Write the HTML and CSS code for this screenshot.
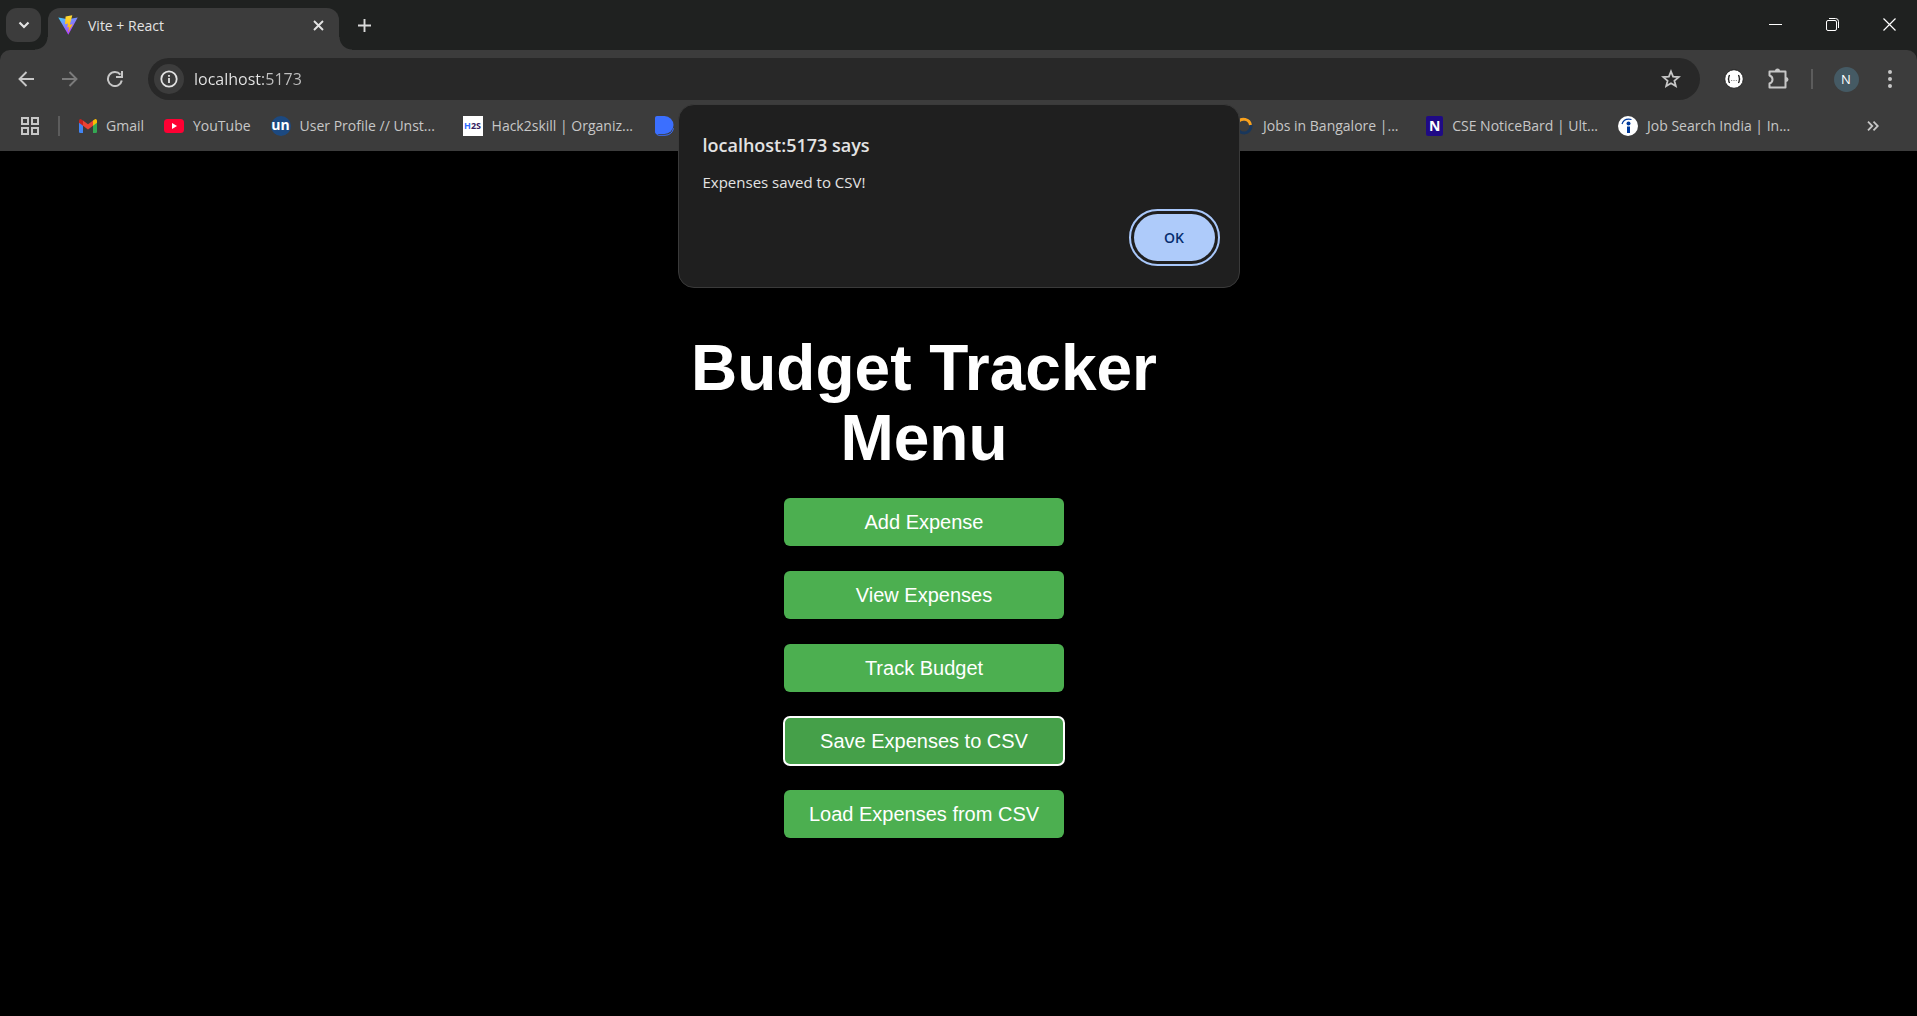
FILE: index.html
```html
<!DOCTYPE html>
<html lang="en">
<head>
<meta charset="utf-8">
<title>Vite + React</title>
<link rel="stylesheet" href="styles.css">
</head>
<body>
<header class="browser">
  <div class="tabstrip">
    <button class="tab-search" aria-label="Search tabs"><svg width="12" height="8" viewBox="0 0 12 8"><path d="M1.500 1.500 6 6l4.500-4.500" fill="none" stroke="#e3e3e3" stroke-width="2.200"/></svg></button>
    <div class="tab">
      <svg width="20" height="20" viewBox="0 0 20 20">
        <defs>
          <linearGradient id="vite" x1="0" y1="0" x2=".6" y2="1"><stop offset="0" stop-color="#41d1ff"/><stop offset="1" stop-color="#bd34fe"/></linearGradient>
          <linearGradient id="bolt" x1="0" y1="0" x2="0" y2="1"><stop offset="0" stop-color="#ffdd35"/><stop offset="1" stop-color="#ffa800"/></linearGradient>
        </defs>
        <path d="M.300 2.600 10 4.200l9.700-1.600L10.300 19.800z" fill="url(#vite)"/>
        <path d="M14.300.2 7.600 1.500 7 9.200l3-.7-.8 4 2-.5-1.400 5.500 5-8.300-3 .6z" fill="url(#bolt)"/>
      </svg>
      <span class="tab-title">Vite + React</span>
      <button class="tab-close" aria-label="Close tab"><svg width="11" height="11" viewBox="0 0 11 11"><path d="m1 1 9 9M10 1l-9 9" stroke="#e3e3e3" stroke-width="1.900"/></svg></button>
    </div>
    <button class="new-tab" aria-label="New tab"><svg width="13" height="13" viewBox="0 0 13 13"><path d="M6.500 0v13M0 6.500h13" stroke="#dadada" stroke-width="1.900"/></svg></button>
    <div class="window-controls">
      <button aria-label="Minimize"><svg width="13" height="13" viewBox="0 0 13 13"><path d="M0 6.500h13" stroke="#fff"/></svg></button>
      <button aria-label="Restore"><svg width="13" height="13" viewBox="0 0 13 13"><path d="M3 .5h6.500a3 3 0 0 1 3 3V10" fill="none" stroke="#fff"/><rect x=".5" y="2.500" width="10" height="10" rx="1.500" fill="none" stroke="#fff"/></svg></button>
      <button aria-label="Close"><svg width="13" height="13" viewBox="0 0 13 13"><path d="m.5.5 12 12m0-12-12 12" stroke="#fff" stroke-width="1.200"/></svg></button>
    </div>
  </div>

  <div class="toolbar">
    <button class="tool" aria-label="Back"><svg width="16" height="16" viewBox="0 0 16 16"><path d="M16 8H1.500M8.500 1 1.500 8l7 7" fill="none" stroke="#c7c7c7" stroke-width="1.900"/></svg></button>
    <button class="tool" aria-label="Forward"><svg width="16" height="16" viewBox="0 0 16 16"><path d="M0 8h14.500M7.500 1l7 7-7 7" fill="none" stroke="#7b7b7b" stroke-width="1.900"/></svg></button>
    <button class="tool" aria-label="Reload"><svg width="18" height="16" viewBox="-2 0 18 16"><path d="M13.400 3.600A7 7 0 1 0 14.800 9.500" fill="none" stroke="#c7c7c7" stroke-width="2"/><path d="M15 0v6H9" fill="none" stroke="#c7c7c7" stroke-width="2"/></svg></button>
    <div class="omnibox">
      <button class="site-info" aria-label="View site information"><svg width="18" height="18" viewBox="0 0 18 18"><circle cx="9" cy="9" r="7.700" fill="none" stroke="#e3e3e3" stroke-width="1.800"/><path d="M9 8v5M9 5v1.800" stroke="#e3e3e3" stroke-width="1.800"/></svg></button>
      <input class="address" type="text" aria-label="Address" value="localhost:5173">
      <button class="star" aria-label="Bookmark this tab"><svg width="20" height="20" viewBox="0 0 20 20"><path d="m10 2.500 2.100 5.200 5.600.4-4.300 3.600 1.400 5.400L10 14.200l-4.800 2.900 1.400-5.400-4.300-3.600 5.600-.4z" fill="none" stroke="#c7c7c7" stroke-width="1.800"/></svg></button>
    </div>
    <button class="tool" aria-label="JSON viewer extension"><svg width="20" height="20" viewBox="0 0 20 20"><circle cx="10" cy="10" r="9.300" fill="#fff" stroke="#222"/><path d="M6 6.500q-1.200 0-1.200 1.200v1.300q0 1-1 1 1 0 1 1v1.300q0 1.200 1.200 1.200M14 6.500q1.200 0 1.200 1.200v1.300q0 1 1 1-1 0-1 1v1.300q0 1.200-1.200 1.200" fill="none" stroke="#222" stroke-width="1.300"/><path d="M7.200 11.500h1m1.300 0h1m1.300 0h1" stroke="#777" stroke-width="1"/></svg></button>
    <button class="tool" aria-label="Extensions"><svg width="22" height="22" viewBox="0 0 22 22"><path d="M2.500 3.500H18.500V19.500H2.500V15.500Q5.500 14.500 5.500 11.500T2.500 7.500Z" fill="none" stroke="#c7c7c7" stroke-width="2" stroke-linejoin="round"/><path d="M8 3a2.500 2.500 0 0 1 5 0zM19 9a2.500 2.500 0 0 1 0 5z" fill="#c7c7c7"/></svg></button>
    <span class="tool-divider"></span>
    <button class="tool" aria-label="Profile"><span class="avatar">N</span></button>
    <button class="tool" aria-label="Menu"><svg width="4" height="18" viewBox="0 0 4 18"><g fill="#c7c7c7"><circle cx="2" cy="2" r="2"/><circle cx="2" cy="9" r="2"/><circle cx="2" cy="16" r="2"/></g></svg></button>
  </div>

  <nav class="bookmarks" aria-label="Bookmarks">
    <button class="apps" aria-label="Apps"><svg width="18" height="18" viewBox="0 0 18 18"><g fill="none" stroke="#c7c7c7" stroke-width="2"><path d="M1 1h6v6H1zM11 1h6v6h-6zM1 11h6v6H1zM11 11h6v6h-6z"/></g></svg></button>
    <span class="bar-divider"></span>
    <a class="bookmark" href="#gmail"><svg width="18" height="14" viewBox="0 0 18 14"><path d="M0 3h4v11H1.300A1.300 1.300 0 0 1 0 12.700z" fill="#4285f4"/><path d="M14 3h4v9.700a1.300 1.300 0 0 1-1.300 1.300H14z" fill="#34a853"/><path d="M14 1.500 15.500.4A1.600 1.600 0 0 1 18 1.700v2.100l-4 3z" fill="#fbbc04"/><path d="M4 1.500 2.500.4A1.600 1.600 0 0 0 0 1.700v2.100l4 3z" fill="#c5221f"/><path d="M4 1.500 9 5.300l5-3.800v5.300l-5 3.700-5-3.700z" fill="#ea4335"/></svg>Gmail</a>
    <a class="bookmark" href="#youtube"><svg width="20" height="14" viewBox="0 0 20 14"><rect width="20" height="14" rx="3.500" fill="#ff0033"/><path d="m8 4 5 3-5 3z" fill="#fff"/></svg>YouTube</a>
    <a class="bookmark wide" href="#profile"><span class="badge un">un</span>User Profile // Unst...</a>
    <a class="bookmark wide" href="#hack2skill"><span class="badge h2s"><i>H</i>2S</span>Hack2skill | Organiz...</a>
    <a class="bookmark" href="#docs" aria-label="Docs"><svg width="20" height="20" viewBox="0 0 20 20"><path d="M1 16.500q.5 2.800 3 2.800h6a9 9 0 0 0 8.500-7" fill="none" stroke="#3b6fff"/><path d="M2 0h7.500a9 9 0 0 1 0 18H2A2 2 0 0 1 0 16V2A2 2 0 0 1 2 0z" fill="#3b6fff"/></svg></a>
    <a class="bookmark wide jobs" href="#jobs"><svg width="20" height="20" viewBox="0 0 20 20"><circle cx="10" cy="10" r="7" fill="none" stroke="#19375c" stroke-width="3"/><path d="M4 6a7 7 0 0 1 12.500 3" fill="none" stroke="#f9a01b" stroke-width="3"/></svg>Jobs in Bangalore |...</a>
    <a class="bookmark wide" href="#notices"><span class="badge notice">N</span>CSE NoticeBard | Ult...</a>
    <a class="bookmark wide" href="#search"><svg width="20" height="20" viewBox="0 0 20 20"><circle cx="10" cy="10" r="10" fill="#fff"/><circle cx="10.500" cy="7.500" r="2" fill="#003a9b"/><path d="M10.500 10.500V17" stroke="#003a9b" stroke-width="3"/><path d="M4 8q2-6 9.500-4.500" fill="none" stroke="#003a9b" stroke-width="1.200"/></svg>Job Search India | In...</a>
    <button class="overflow" aria-label="More bookmarks"><svg width="12" height="10" viewBox="0 0 12 10"><path d="m1 .7 4.300 4.300L1 9.300M6.500.7 10.800 5 6.500 9.300" fill="none" stroke="#c7c7c7" stroke-width="1.800"/></svg></button>
  </nav>
</header>

<main class="menu">
  <h1>Budget Tracker Menu</h1>
  <button class="action">Add Expense</button>
  <button class="action">View Expenses</button>
  <button class="action">Track Budget</button>
  <button class="action focused">Save Expenses to CSV</button>
  <button class="action">Load Expenses from CSV</button>
</main>

<dialog class="alert" open aria-labelledby="alert-title">
  <h2 id="alert-title">localhost:5173 says</h2>
  <p>Expenses saved to CSV!</p>
  <button class="ok">OK</button>
</dialog>
</body>
</html>
```
FILE: styles.css
```css
* { box-sizing: border-box; }

body {
  margin: 0;
  min-height: 100vh;
  background: #000;
  font-family: "Open Sans", "Noto Sans", sans-serif;
  font-size: 14px;
}

button {
  display: flex;
  align-items: center;
  justify-content: center;
  padding: 0;
  border: 0;
  background: none;
  color: inherit;
  font: inherit;
  flex: none;
}

svg { display: block; flex: none; }

.browser { background: #1f2120; color: #c7c7c7; }

/* Tab strip */
.tabstrip {
  display: flex;
  height: 50px;
  padding: 8px 0 0 6px;
}

.tab-search {
  width: 35px;
  height: 34px;
  margin-right: 7px;
  border-radius: 11px;
  background: #3c3c3c;
}

.tab {
  position: relative;
  display: flex;
  align-items: center;
  width: 291px;
  height: 42px;
  padding: 0 8px 8px 10px;
  border-radius: 12px 12px 0 0;
  background: #3c3c3c;
  color: #e3e3e3;
}

.tab::before,
.tab::after {
  content: "";
  position: absolute;
  bottom: 0;
  width: 13px;
  height: 13px;
}

.tab::before {
  right: 100%;
  background: radial-gradient(circle at 0 0, transparent 12px, #3c3c3c 13px);
}

.tab::after {
  left: 100%;
  background: radial-gradient(circle at 100% 0, transparent 12px, #3c3c3c 13px);
}

.tab-title { flex: 1; padding-left: 10px; }

.tab-close { width: 26px; height: 26px; }

.new-tab { width: 34px; height: 34px; margin-left: 8px; }

.window-controls { display: flex; margin: -8px 0 0 auto; }

.window-controls button { width: 57px; height: 48px; padding-left: 2px; }

/* Toolbar */
.toolbar {
  display: flex;
  align-items: center;
  padding: 8px 5px 0 4px;
  border-radius: 10px 10px 0 0;
  background: #3c3c3c;
}

.tool { width: 44px; height: 42px; }

.omnibox {
  display: flex;
  flex: 1;
  align-items: center;
  height: 42px;
  margin: 0 12px;
  padding: 0 14px 0 6px;
  border-radius: 21px;
  background: #282828;
}

.site-info {
  width: 30px;
  height: 30px;
  border-radius: 50%;
  background: #3c3c3c;
}

.address {
  flex: 1;
  min-width: 0;
  margin-left: 10px;
  padding: 0;
  border: 0;
  outline: 0;
  background: linear-gradient(90deg, #e8e8e8 69px, #c0c0c0 69px);
  background-clip: text;
  color: transparent;
  font: inherit;
  font-size: 16px;
}

.star { width: 30px; height: 30px; }

.tool-divider {
  width: 2px;
  height: 20px;
  margin: 0 11px;
  background: #5c5c5c;
}

.avatar {
  width: 25px;
  height: 25px;
  border-radius: 50%;
  background: #455a64;
  color: #fff;
  font-size: 13px;
  line-height: 25px;
  text-align: center;
}

/* Bookmarks */
.bookmarks {
  display: flex;
  align-items: center;
  height: 51px;
  padding: 0 31px 0 21px;
  background: #3c3c3c;
}

.bar-divider {
  width: 2px;
  height: 20px;
  margin: 0 19px;
  background: #5c5c5c;
}

.bookmark {
  display: flex;
  flex: none;
  align-items: center;
  gap: 9px;
  margin-right: 20px;
  color: #c7c7c7;
  text-decoration: none;
  white-space: nowrap;
}

.wide { width: 172px; }

.jobs { margin-left: auto; }

.badge {
  width: 20px;
  height: 20px;
  color: #fff;
  font-weight: 700;
  line-height: 20px;
  text-align: center;
}

.un { border-radius: 50%; background: #1c4980; line-height: 17px; }

.h2s { background: #fff; color: #33205e; font-size: 9px; }

.h2s i { color: #2f6bff; font-style: normal; }

.notice { border-radius: 2px; background: #1f0a85; }

.overflow { width: 26px; height: 26px; margin-left: 50px; }

/* Page */
.menu {
  display: flex;
  flex-direction: column;
  align-items: center;
  gap: 25px;
  padding: 182px 69px 48px 0;
  font-family: "Liberation Sans", Arial, sans-serif;
}

.menu h1 {
  max-width: 500px;
  margin: 0;
  color: #fff;
  font-size: 64px;
  line-height: 70px;
  text-align: center;
}

.action {
  width: 280px;
  height: 48px;
  border-radius: 6px;
  background: #4caf50;
  color: #fff;
  font-size: 20px;
}

.focused {
  outline: 2px solid #fff;
  outline-offset: -1px;
  background: #45a049;
}

/* Alert */
.alert {
  position: absolute;
  top: 104px;
  width: 562px;
  margin: 0 auto;
  padding: 24px 24px 26px;
  border: 1px solid #3a3a3a;
  border-radius: 16px;
  background: #1f1f1f;
  color: #e3e3e3;
}

.alert h2 {
  margin: 0 0 11px;
  font-size: 18px;
  font-weight: 600;
  line-height: 32px;
}

.alert p { margin: 0 0 22px; font-size: 15px; line-height: 20px; }

.ok {
  width: 81px;
  height: 47px;
  margin-left: auto;
  border-radius: 24px;
  outline: 2px solid #a8c7fa;
  outline-offset: 3px;
  background: #aecbfa;
  color: #062e6f;
  font-weight: 600;
}
```
